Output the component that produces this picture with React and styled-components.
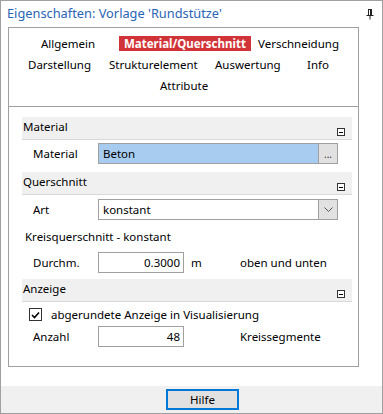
import React from 'react';
import styled, { createGlobalStyle } from 'styled-components';

const GlobalStyle = createGlobalStyle`
  html, body { margin: 0; padding: 0; background: #fff; }
  body { font-family: "Noto Sans", "Open Sans", sans-serif; font-size: 11.5px; color: #000; }
  *, *::before, *::after { box-sizing: border-box; }
`;

const Window = styled.div`
  width: 383px;
  height: 414px;
  border: 1px solid #a0a0a0;
  display: flex;
  flex-direction: column;
  background: #fff;
`;

const TitleBar = styled.div`
  height: 26px;
  display: flex;
  align-items: center;
  justify-content: space-between;
  padding: 0 8px 0 6px;
`;

const Title = styled.div`
  color: #2a64b6;
  font-size: 12.8px;
  margin-top: -2px;
`;

const Body = styled.div`
  flex: 1;
  padding: 0 23px 0 7px;
  display: flex;
  flex-direction: column;
`;

const Panel = styled.div`
  height: 340px;
  border: 1px solid #a0a0a0;
  display: flex;
  flex-direction: column;
`;

const TabArea = styled.div`
  height: 79px;
  border-bottom: 1px solid #a0a0a0;
  position: relative;
`;

const Tab = styled.div`
  position: absolute;
  left: ${p => p.x}px;
  top: ${p => p.y}px;
  height: 15px;
  line-height: 15px;
  padding: 0 ${p => (p.active ? 5 : 0)}px;
  background: ${p => (p.active ? '#d13438' : 'transparent')};
  color: ${p => (p.active ? '#fff' : '#000')};
  font-weight: ${p => (p.active ? 700 : 400)};
  white-space: nowrap;
`;

const Content = styled.div`
  padding: 10px 6px 0 13px;
  display: flex;
  flex-direction: column;
`;

const SectionHead = styled.div`
  height: 23px;
  background: #f0f0f0;
  border-bottom: 1px solid #d9d9d9;
  display: flex;
  justify-content: space-between;
  padding: 0 7px 0 1px;
  line-height: 20px;
`;

const Collapse = styled.div`
  width: 8px;
  height: 8px;
  border: 1px solid #333;
  background: #fff;
  margin-top: 11px;
  position: relative;
  &::after {
    content: '';
    position: absolute;
    left: 1px;
    right: 1px;
    top: 2.5px;
    height: 1px;
    background: #000;
  }
`;

const Row = styled.div`
  display: flex;
  align-items: flex-start;
  height: ${p => p.h}px;
  padding-top: ${p => p.pt || 0}px;
  padding-left: ${p => p.pl ?? 11}px;
`;

const Label = styled.div`
  width: ${p => p.w || 65}px;
  flex: none;
  line-height: 21px;
`;

const Text = styled.div`
  line-height: 21px;
  white-space: nowrap;
`;

const Field = styled.div`
  width: ${p => p.w}px;
  height: 21px;
  border: 1px solid #a0a0a0;
  background: ${p => p.bg || '#fff'};
  display: flex;
  align-items: stretch;
`;

const FieldText = styled.div`
  flex: 1;
  padding: 0 ${p => (p.right ? 3 : 4)}px;
  text-align: ${p => (p.right ? 'right' : 'left')};
  line-height: 19px;
`;

const SideButton = styled.div`
  width: 19px;
  border-left: 1px solid #a0a0a0;
  background: #e1e1e1;
  display: flex;
  align-items: center;
  justify-content: center;
  color: #333;
  font-size: 10px;
`;

const Unit = styled.div`
  width: ${p => p.w}px;
  padding-left: ${p => p.pl || 0}px;
  flex: none;
  line-height: 21px;
`;

const Note = styled.div`
  height: 22px;
  padding: 6px 0 0 3px;
  line-height: 16px;
`;

const Check = styled.div`
  width: 13px;
  height: 13px;
  border: 1px solid #333;
  display: flex;
  align-items: center;
  justify-content: center;
  margin: 0 9px 0 0;
  flex: none;
`;

const CheckLabel = styled.div`
  line-height: 13px;
  white-space: nowrap;
`;

const Footer = styled.div`
  height: 27px;
  background: #f0f0f0;
  margin-top: auto;
  display: flex;
  justify-content: center;
  align-items: center;
`;

const Button = styled.div`
  width: 73px;
  height: 21px;
  border: 2px solid #0078d7;
  background: #e1e1e1;
  display: flex;
  align-items: center;
  justify-content: center;
  margin-left: 22px;
`;

const tabs = [
  { t: 'Allgemein', x: 32, y: 8 },
  { t: 'Material/Querschnitt', x: 110, y: 8, active: true },
  { t: 'Verschneidung', x: 249, y: 8 },
  { t: 'Darstellung', x: 19, y: 29 },
  { t: 'Strukturelement', x: 100, y: 29 },
  { t: 'Auswertung', x: 206, y: 29 },
  { t: 'Info', x: 298, y: 29 },
  { t: 'Attribute', x: 151, y: 50 },
];

const Head = ({ children }) => (
  <SectionHead>
    <span>{children}</span>
    <Collapse />
  </SectionHead>
);

export default function App() {
  return (
    <>
      <GlobalStyle />
      <Window>
        <TitleBar>
          <Title>Eigenschaften: Vorlage 'Rundstütze'</Title>
          <svg width="8" height="11" viewBox="0 0 8 11">
            <path d="M2 0.5h4M2.5 0.5v6M5.5 0.5v6M0.5 6.5h7M4 6.5v4" stroke="#222" strokeWidth="1" fill="none" />
            <path d="M4.5 1v5.5" stroke="#222" strokeWidth="1" />
          </svg>
        </TitleBar>
        <Body>
          <Panel>
            <TabArea>
              {tabs.map(tab => (
                <Tab key={tab.t} x={tab.x} y={tab.y} active={tab.active}>{tab.t}</Tab>
              ))}
            </TabArea>
            <Content>
              <Head>Material</Head>
              <Row h={32} pt={3}>
                <Label>Material</Label>
                <Field w={240} bg="#a8ccef">
                  <FieldText>Beton</FieldText>
                  <SideButton>...</SideButton>
                </Field>
              </Row>
              <Head>Querschnitt</Head>
              <Row h={28} pt={4}>
                <Label>Art</Label>
                <Field w={240}>
                  <FieldText>konstant</FieldText>
                  <SideButton>
                    <svg width="9" height="5" viewBox="0 0 9 5">
                      <path d="M0.5 0.5l4 4 4-4" stroke="#555" fill="none" />
                    </svg>
                  </SideButton>
                </Field>
              </Row>
              <Note>Kreisquerschnitt - konstant</Note>
              <Row h={34} pt={7}>
                <Label>Durchm.</Label>
                <Field w={86}>
                  <FieldText right>0.3000</FieldText>
                </Field>
                <Unit w={56} pl={7}>m</Unit>
                <Text>oben und unten</Text>
              </Row>
              <Head>Anzeige</Head>
              <Row h={24} pt={6} pl={7}>
                <Check>
                  <svg width="9" height="8" viewBox="0 0 9 8">
                    <path d="M1 4l2.5 2.5L8 1.5" stroke="#000" strokeWidth="1.6" fill="none" />
                  </svg>
                </Check>
                <CheckLabel>abgerundete Anzeige in Visualisierung</CheckLabel>
              </Row>
              <Row h={22} pt={0}>
                <Label>Anzahl</Label>
                <Field w={86}>
                  <FieldText right>48</FieldText>
                </Field>
                <Unit w={56} />
                <Text>Kreissegmente</Text>
              </Row>
            </Content>
          </Panel>
        </Body>
        <Footer>
          <Button>Hilfe</Button>
        </Footer>
      </Window>
    </>
  );
}
